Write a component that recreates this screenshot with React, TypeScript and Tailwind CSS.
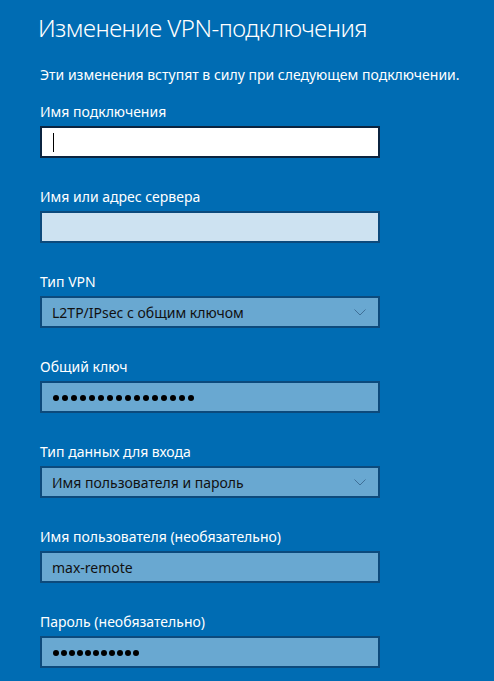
import React from "react";

const font = { fontFamily: '"Noto Sans", "Open Sans", sans-serif' };

function Chevron() {
  return (
    <svg width="12" height="7" viewBox="0 0 12 7" className="shrink-0">
      <path d="M0.5 0.5 L6 6 L11.5 0.5" fill="none" stroke="#3f6f96" strokeWidth="1" />
    </svg>
  );
}

function Field({ label, children, className }: { label: string; children: React.ReactNode; className?: string }) {
  return (
    <div className={className}>
      <div className="text-[14px] leading-[20px] text-white mb-[4px]">{label}</div>
      {children}
    </div>
  );
}

const boxBase = "w-[340px] h-[32px] border-2 flex items-center px-[10px] text-[14px] text-[#111]";

function Dots({ n, wide }: { n: number; wide?: boolean }) {
  return (
    <div className={`flex pl-[1px] pt-[2px] ${wide ? "gap-[3px]" : "gap-[2px]"}`}>
      {Array.from({ length: n }).map((_, i) => (
        <span key={i} className="w-[6px] h-[6px] rounded-full bg-black" />
      ))}
    </div>
  );
}

export default function App() {
  return (
    <div className="w-[494px] h-[681px] bg-[#006cb3] overflow-hidden" style={font}>
      <div className="pl-[40px] pt-[10px]">
        <div className="text-[24px] leading-[36px] font-light tracking-[-0.5px] text-white -ml-[2px]">
          Изменение VPN-подключения
        </div>
        <div className="text-[14px] leading-[20px] text-white mt-[19px]">
          Эти изменения вступят в силу при следующем подключении.
        </div>
        <div className="flex flex-col gap-[29px] mt-[17px]">
          <Field label="Имя подключения">
            <div className={`${boxBase} bg-white border-[#0b2440]`}>
              <span className="w-[1px] h-[19px] bg-black ml-[1px]" />
            </div>
          </Field>
          <Field label="Имя или адрес сервера">
            <div className={`${boxBase} bg-[#cde2f1] border-[#0c4a7c]`} />
          </Field>
          <Field label="Тип VPN">
            <div className={`${boxBase} bg-[#69a8d1] border-[#0c4a7c] justify-between pr-[12px]`}>
              <span>L2TP/IPsec с общим ключом</span>
              <Chevron />
            </div>
          </Field>
          <Field label="Общий ключ">
            <div className={`${boxBase} bg-[#69a8d1] border-[#0c4a7c]`}>
              <Dots n={16} wide />
            </div>
          </Field>
          <Field label="Тип данных для входа">
            <div className={`${boxBase} bg-[#69a8d1] border-[#0c4a7c] justify-between pr-[12px]`}>
              <span>Имя пользователя и пароль</span>
              <Chevron />
            </div>
          </Field>
          <Field label="Имя пользователя (необязательно)">
            <div className={`${boxBase} bg-[#69a8d1] border-[#0c4a7c]`}>
              <span>max-remote</span>
            </div>
          </Field>
          <Field label="Пароль (необязательно)">
            <div className={`${boxBase} bg-[#69a8d1] border-[#0c4a7c]`}>
              <Dots n={11} />
            </div>
          </Field>
        </div>
      </div>
    </div>
  );
}
